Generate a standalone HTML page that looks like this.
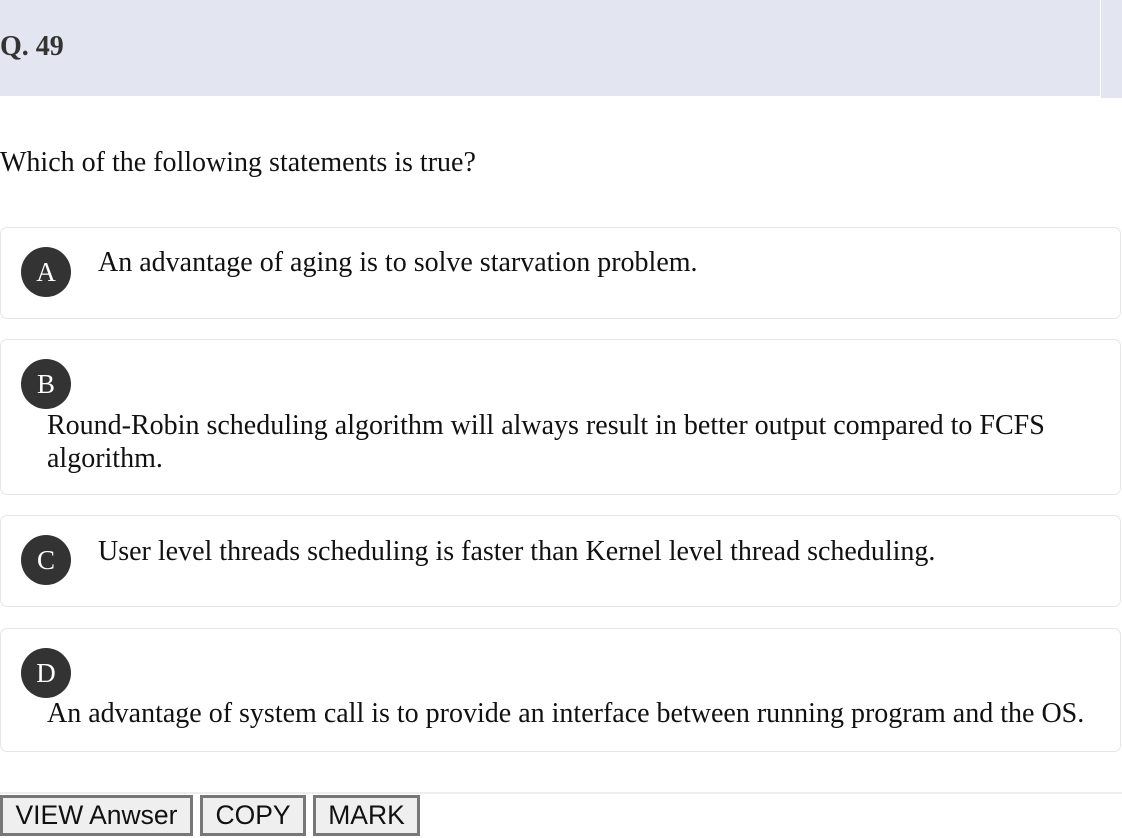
<!DOCTYPE html>
<html><head><style>
body{margin:0;width:1122px;height:838px;overflow:hidden;background:#fff;font-family:"Liberation Serif",serif;color:#111;position:relative}
.hdr{position:absolute;left:0;top:0;width:1100px;height:96px;background:#e3e6f0}
.hdr2{position:absolute;left:1101px;top:0;width:21px;height:98px;background:#e3e6f0}
.q{position:absolute;left:0;top:30px;font-weight:bold;font-size:28px;line-height:33px;color:#333}
.qt{position:absolute;left:0;top:146px;font-size:28px;line-height:33px}
.card{position:absolute;left:0;width:1119px;border:1px solid #e6e6e6;border-radius:7px;box-sizing:content-box}
.c{position:absolute;left:21px;width:50px;height:50px;border-radius:50%;background:#333;color:#fff;font-size:27px;text-align:center;line-height:50px}
.t{position:absolute;font-size:28px;line-height:33px;white-space:nowrap}
.line{position:absolute;left:0;top:792px;width:1122px;height:2px;background:#eee}
.b{position:absolute;top:795px;height:41px;box-sizing:border-box;border:3px solid #777;background:#efefef;font-family:"Liberation Sans",sans-serif;font-size:26.5px;line-height:35px;text-align:center;color:#111;white-space:nowrap}
</style></head><body>
<div class="hdr"></div><div class="hdr2"></div>
<div class="q">Q. 49</div>
<div class="qt">Which of the following statements is true?</div>
<div class="card" style="top:227px;height:90px"></div>
<div class="c" style="top:247px">A</div>
<div class="t" style="left:98px;top:246px">An advantage of aging is to solve starvation problem.</div>
<div class="card" style="top:339px;height:154px"></div>
<div class="c" style="top:359px">B</div>
<div class="t" style="left:47px;top:409px">Round-Robin scheduling algorithm will always result in better output compared to FCFS<br>algorithm.</div>
<div class="card" style="top:515px;height:90px"></div>
<div class="c" style="top:535px">C</div>
<div class="t" style="left:98px;top:535px">User level threads scheduling is faster than Kernel level thread scheduling.</div>
<div class="card" style="top:628px;height:122px"></div>
<div class="c" style="top:648px">D</div>
<div class="t" style="left:47px;top:697px">An advantage of system call is to provide an interface between running program and the OS.</div>
<div class="line"></div>
<div class="b" style="left:0;width:193px">VIEW Anwser</div>
<div class="b" style="left:200px;width:106px">COPY</div>
<div class="b" style="left:313px;width:107px">MARK</div>
</body></html>
